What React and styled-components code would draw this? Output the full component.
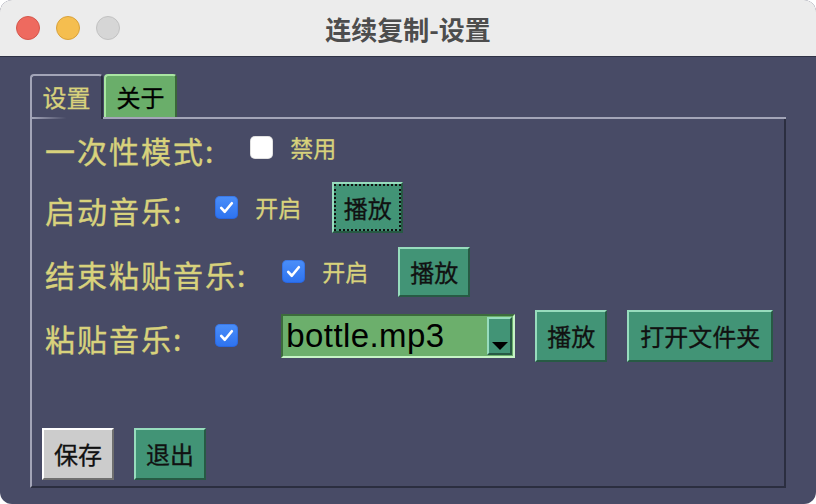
import React from "react";
import styled, { createGlobalStyle, css } from "styled-components";

const Global = createGlobalStyle`
  html, body { margin: 0; padding: 0; background: #ffffff; }
  body {
    width: 816px; height: 504px; overflow: hidden;
    font-family: "Noto Sans CJK SC", "Liberation Sans", sans-serif;
  }
  * { box-sizing: border-box; }
`;

const Window = styled.div`
  width: 816px;
  height: 504px;
  border-radius: 12px;
  overflow: hidden;
  display: flex;
  flex-direction: column;
  background: #484b66;
`;

const TitleBar = styled.div`
  flex: none;
  height: 57px;
  background: #ececec;
  border-bottom: 1px solid #2f3246;
  display: grid;
  grid-template-columns: 1fr auto 1fr;
  align-items: center;
`;

const Lights = styled.div`
  display: flex;
  gap: 16px;
  padding-left: 16px;
`;

const Light = styled.span`
  width: 24px;
  height: 24px;
  border-radius: 50%;
  background: ${(p) => p.$c};
  border: 1px solid ${(p) => p.$b};
`;

const Title = styled.div`
  font-size: 26px;
  font-weight: 700;
  color: #4d4d4d;
  line-height: 1;
  padding-top: 1px;
`;

const Body = styled.div`
  flex: 1;
  display: flex;
  flex-direction: column;
  padding: 17px 30px 16px 30px;
`;

const TabRow = styled.div`
  flex: none;
  height: 45px;
  display: flex;
  align-items: flex-start;
  gap: 1px;
  background: linear-gradient(#a3a5b8, #a3a5b8) left bottom / 100% 2px no-repeat;
`;

const Tab = styled.div`
  width: 73px;
  display: flex;
  align-items: center;
  justify-content: center;
  font-size: 24px;
  line-height: 1;
  -webkit-text-stroke: 0.3px currentColor;
  border-style: solid;
  border-width: 2px 2px 0 2px;
  border-radius: 4px 4px 0 0;
  ${(p) =>
    p.$active
      ? css`
          height: 45px;
          padding-bottom: 2px;
          color: #d8d27c;
          border-color: #a3a5b8 #2b2e40 #2b2e40 #a3a5b8;
          background: #484b66
            linear-gradient(to right, #a3a5b8, rgba(163, 165, 184, 0) 50%)
            left bottom / 100% 2px no-repeat;
        `
      : css`
          height: 43px;
          color: #000000;
          background: #6aae6a;
          border-color: #a9e6a2 #3a663a #3a663a #a9e6a2;
        `}
`;

const Panel = styled.div`
  flex: 1;
  display: flex;
  flex-direction: column;
  border-left: 2px solid #a3a5b8;
  border-right: 2px solid #2b2e40;
  border-bottom: 2px solid #2b2e40;
  padding: 7px 0 6px 10px;
`;

const Rows = styled.div`
  display: flex;
  flex-direction: column;
  gap: 13px;
  padding-left: 3px;
`;

const Row = styled.div`
  display: flex;
  align-items: center;
  height: ${(p) => p.$h || 51}px;
`;

const Label = styled.span`
  font-size: 30px;
  letter-spacing: 2px;
  line-height: 1;
  color: #d8d27c;
  -webkit-text-stroke: 0.4px currentColor;
  margin-right: ${(p) => p.$mr || 32}px;
  padding-top: 5px;
`;

const Box = styled.span`
  flex: none;
  width: 23px;
  height: 23px;
  border-radius: 5px;
  display: flex;
  align-items: center;
  justify-content: center;
  ${(p) =>
    p.$checked
      ? css`
          background: linear-gradient(#4b8ff9, #2d72ef);
          box-shadow: inset 0 0 0 1px rgba(30, 80, 200, 0.35);
        `
      : css`
          background: #ffffff;
          box-shadow: inset 0 0 0 1px rgba(0, 0, 0, 0.12);
        `}
`;

const Small = styled.span`
  font-size: 23px;
  line-height: 1;
  color: #d8d27c;
  -webkit-text-stroke: 0.3px currentColor;
  margin-left: 17px;
`;

const Button = styled.button`
  flex: none;
  height: ${(p) => p.$h || 51}px;
  padding: 0 ${(p) => p.$px || 10}px;
  margin: 0;
  margin-left: ${(p) => p.$ml || 0}px;
  font-family: "Noto Sans CJK SC", sans-serif;
  font-size: 24px;
  line-height: 1;
  color: #111111;
  -webkit-text-stroke: 0.3px currentColor;
  border-style: solid;
  border-width: 2px;
  border-radius: 0;
  ${(p) =>
    p.$gray
      ? css`
          background: #cccccc;
          border-color: #ffffff #6f6f6f #6f6f6f #ffffff;
        `
      : css`
          background: #429476;
          border-color: #97dcbd #275a44 #275a44 #97dcbd;
        `}
  ${(p) =>
    p.$focus &&
    css`
      outline: 2px dotted #111111;
      outline-offset: -4px;
    `}
`;

const Combo = styled.div`
  flex: none;
  width: 234px;
  height: 44px;
  margin-left: 43px;
  display: flex;
  align-items: center;
  background: #6caf6c;
  border-style: solid;
  border-width: 2px;
  border-color: #3c6c3c #c6f4c6 #c6f4c6 #3c6c3c;
`;

const ComboText = styled.span`
  flex: 1;
  font-family: "Liberation Sans", Arial, sans-serif;
  font-size: 33px;
  letter-spacing: 0.4px;
  line-height: 1;
  color: #000000;
  padding-left: 3px;
`;

const Arrow = styled.span`
  flex: none;
  width: 25px;
  height: 38px;
  margin-right: 1px;
  background: #429476;
  border-style: solid;
  border-width: 2px;
  border-color: #97dcbd #275a44 #275a44 #97dcbd;
  display: flex;
  align-items: flex-end;
  justify-content: center;
  padding-bottom: 3px;
  &::after {
    content: "";
    width: 0;
    height: 0;
    border-left: 8px solid transparent;
    border-right: 8px solid transparent;
    border-top: 8px solid #000000;
  }
`;

const Footer = styled.div`
  margin-top: auto;
  display: flex;
  gap: 20px;
`;

const Check = ({ checked }) => (
  <Box $checked={checked}>
    {checked && (
      <svg width="17" height="17" viewBox="0 0 16 16">
        <path
          d="M3 8.4 L6.4 12 L13 4"
          fill="none"
          stroke="#ffffff"
          strokeWidth="2.5"
          strokeLinecap="round"
          strokeLinejoin="round"
        />
      </svg>
    )}
  </Box>
);

export default function App() {
  return (
    <>
      <Global />
      <Window>
        <TitleBar>
          <Lights>
            <Light $c="#ee6a5f" $b="#d5574c" />
            <Light $c="#f5be4f" $b="#d9a23b" />
            <Light $c="#d6d6d6" $b="#c2c2c2" />
          </Lights>
          <Title>连续复制-设置</Title>
          <span />
        </TitleBar>
        <Body>
          <TabRow>
            <Tab $active>设置</Tab>
            <Tab>关于</Tab>
          </TabRow>
          <Panel>
            <Rows>
              <Row $h={43}>
                <Label $mr={35}>一次性模式:</Label>
                <Check />
                <Small>禁用</Small>
              </Row>
              <Row>
                <Label>启动音乐:</Label>
                <Check checked />
                <Small>开启</Small>
                <Button $ml={31} $px={9.5} $focus>播放</Button>
              </Row>
              <Row>
                <Label $mr={35}>结束粘贴音乐:</Label>
                <Check checked />
                <Small>开启</Small>
                <Button $ml={30} $h={50}>播放</Button>
              </Row>
              <Row>
                <Label>粘贴音乐:</Label>
                <Check checked />
                <Combo>
                  <ComboText>bottle.mp3</ComboText>
                  <Arrow />
                </Combo>
                <Button $ml={20} $h={52}>播放</Button>
                <Button $ml={20} $h={52} $px={11}>打开文件夹</Button>
              </Row>
            </Rows>
            <Footer>
              <Button $gray $h={52}>保存</Button>
              <Button $h={52}>退出</Button>
            </Footer>
          </Panel>
        </Body>
      </Window>
    </>
  );
}
